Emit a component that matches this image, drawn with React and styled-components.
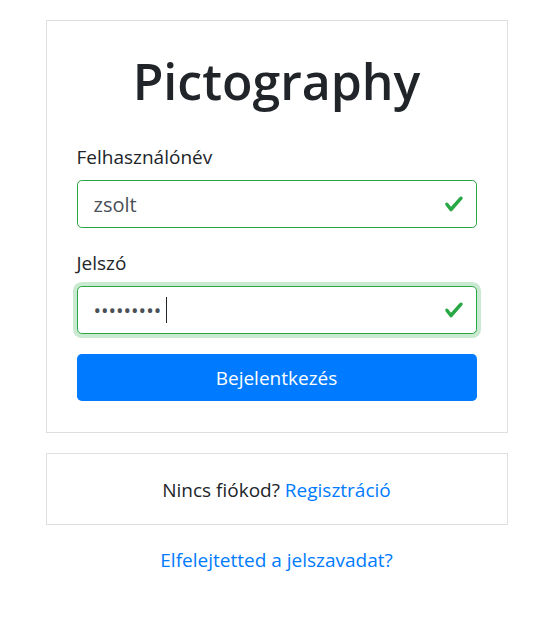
import React from "react";
import styled, { createGlobalStyle } from "styled-components";

const GlobalStyle = createGlobalStyle`
  html, body { margin: 0; padding: 0; background: #fff; }
  body {
    font-family: "Open Sans", "Noto Sans", "Liberation Sans", sans-serif;
    color: #212529;
  }
  * { box-sizing: border-box; }
`;

const Page = styled.div`
  display: flex;
  flex-direction: column;
  align-items: center;
  padding-top: 20px;
`;

const Card = styled.div`
  width: 462px;
  margin-top: ${(p) => p.$mt || "0"};
  border: 1px solid rgba(0, 0, 0, 0.125);
  background: #fff;
  padding: ${(p) => p.$pad || "29px 30px 31px"};
  text-align: ${(p) => (p.$center ? "center" : "left")};
`;

const Title = styled.h1`
  margin: 0 0 30px;
  font-size: 50px;
  font-weight: 600;
  line-height: 62px;
  text-align: center;
  color: #212529;
`;

const Group = styled.div`
  margin-bottom: 20px;
`;

const Label = styled.label`
  display: block;
  font-size: 19px;
  line-height: 30px;
  margin-bottom: 8px;
  color: #212529;
`;

const InputWrap = styled.div`
  position: relative;
`;

const Input = styled.input`
  display: block;
  width: 100%;
  height: 48px;
  padding: 8px 46px 8px 16px;
  font-family: inherit;
  font-size: 20px;
  line-height: 30px;
  color: #495057;
  background: #fff;
  border: 1px solid #28a745;
  border-radius: 4.8px;
  outline: none;
  box-shadow: ${(p) => (p.$focus ? "0 0 0 4px rgba(40, 167, 69, 0.25)" : "none")};
`;

const Check = styled.svg`
  position: absolute;
  right: 13px;
  top: 50%;
  width: 20px;
  height: 20px;
  transform: translateY(-50%);
  pointer-events: none;
`;

const Caret = styled.span`
  position: absolute;
  top: 11px;
  width: 1px;
  height: 26px;
  background: #212529;
  pointer-events: none;
`;

const Button = styled.button`
  display: block;
  width: 100%;
  height: 47px;
  margin: 0;
  border: none;
  border-radius: 4.8px;
  background: #007bff;
  color: #fff;
  font-family: inherit;
  font-size: 19px;
  line-height: 30px;
  cursor: pointer;
`;

const Text = styled.p`
  margin: 0;
  font-size: 19px;
  line-height: 30px;
  color: #212529;
`;

const Link = styled.a`
  color: #007bff;
  text-decoration: none;
  font-size: 19px;
`;

const Footer = styled.div`
  margin-top: 20px;
  text-align: center;
  font-size: 19px;
  line-height: 30px;
`;

const CheckIcon = () => (
  <Check viewBox="0 0 8 8" xmlns="http://www.w3.org/2000/svg">
    <path
      fill="#28a745"
      d="M2.3 6.73L.6 4.53c-.4-1.04.46-1.4 1.1-.8l1.1 1.4 3.4-3.8c.6-.63 1.6-.27 1.2.7l-4 4.6c-.43.5-.8.4-1.1.1z"
    />
  </Check>
);

export default function App() {
  return (
    <>
      <GlobalStyle />
      <Page>
        <Card>
          <Title>Pictography</Title>
          <Group>
            <Label htmlFor="user">Felhasználónév</Label>
            <InputWrap>
              <Input id="user" type="text" defaultValue="zsolt" readOnly />
              <CheckIcon />
            </InputWrap>
          </Group>
          <Group>
            <Label htmlFor="pass">Jelszó</Label>
            <InputWrap>
              <Input id="pass" type="password" defaultValue="123456789" readOnly $focus />
              <Caret style={{ left: 89 }} />
              <CheckIcon />
            </InputWrap>
          </Group>
          <Button type="button">Bejelentkezés</Button>
        </Card>
        <Card $center $mt="20px" $pad="21px 20px 19px">
          <Text>
            Nincs fiókod? <Link href="#">Regisztráció</Link>
          </Text>
        </Card>
        <Footer>
          <Link href="#">Elfelejtetted a jelszavadat?</Link>
        </Footer>
      </Page>
    </>
  );
}
